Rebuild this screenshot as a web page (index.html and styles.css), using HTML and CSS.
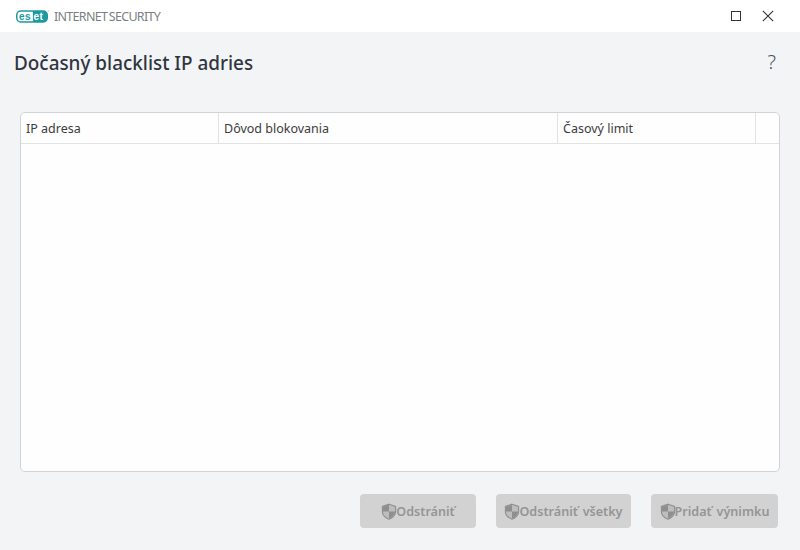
FILE: index.html
```html
<!DOCTYPE html>
<html lang="sk">
<head>
    <meta charset="UTF-8">
    <meta name="viewport" content="width=device-width, initial-scale=1.0">
    <title>Dočasný blacklist IP adries</title>
    <link rel="stylesheet" href="styles.css">
</head>
<body>
    <div class="titlebar">
        <div class="brand">
            <svg class="logo" width="33" height="13" viewBox="0 0 33 13">
                <rect x="0.75" y="1" width="30.5" height="11" rx="4" fill="#fff" stroke="#1b9aa0" stroke-width="1.5"/>
                <path d="M17 1h10.25a4 4 0 0 1 4 4v3a4 4 0 0 1-4 4H17z" fill="#1b9aa0"/>
                <text x="3" y="9.8" class="logo-dark">es</text>
                <text x="17.6" y="9.8" class="logo-light">et</text>
                <circle cx="32.2" cy="0.9" r="0.7" fill="#9cc"/>
            </svg>
            <span class="product">INTERNET SECURITY</span>
        </div>
        <div class="window-buttons">
            <svg width="12" height="12" viewBox="0 0 12 12">
                <rect x="1.5" y="1.5" width="9" height="9" fill="none" stroke="#333" stroke-width="1"/>
            </svg>
            <svg width="12" height="12" viewBox="0 0 12 12">
                <path d="M0.8 0.8L11.2 11.2M11.2 0.8L0.8 11.2" fill="none" stroke="#333" stroke-width="1.1"/>
            </svg>
        </div>
    </div>

    <div class="content">
        <div class="page-head">
            <h1>Dočasný blacklist IP adries</h1>
            <span class="help">?</span>
        </div>

        <div class="table-box">
            <div class="table-head">
                <div class="col col-ip">IP adresa</div>
                <div class="col col-reason">Dôvod blokovania</div>
                <div class="col col-time">Časový limit</div>
                <div class="col col-end"></div>
            </div>
        </div>

        <div class="actions">
            <button class="btn btn-remove" disabled>
                <svg class="shield" width="16" height="17" viewBox="0 0 16 17"><path d="M8 1.2L14.6 3.4V8.5C14.6 12 12 14.6 8 16.2C4 14.6 1.4 12 1.4 8.5V3.4z" fill="#bdbdbd" stroke="#8f8f8f" stroke-width="1.1"/><path d="M8 1.8L2 3.8V8.5H8zM8 8.5V15.6C11.4 14.2 14 11.8 14 8.5z" fill="#8f8f8f"/></svg>Odstrániť
            </button>
            <button class="btn btn-remove-all" disabled>
                <svg class="shield" width="16" height="17" viewBox="0 0 16 17"><path d="M8 1.2L14.6 3.4V8.5C14.6 12 12 14.6 8 16.2C4 14.6 1.4 12 1.4 8.5V3.4z" fill="#bdbdbd" stroke="#8f8f8f" stroke-width="1.1"/><path d="M8 1.8L2 3.8V8.5H8zM8 8.5V15.6C11.4 14.2 14 11.8 14 8.5z" fill="#8f8f8f"/></svg>Odstrániť všetky
            </button>
            <button class="btn btn-add" disabled>
                <svg class="shield" width="16" height="17" viewBox="0 0 16 17"><path d="M8 1.2L14.6 3.4V8.5C14.6 12 12 14.6 8 16.2C4 14.6 1.4 12 1.4 8.5V3.4z" fill="#bdbdbd" stroke="#8f8f8f" stroke-width="1.1"/><path d="M8 1.8L2 3.8V8.5H8zM8 8.5V15.6C11.4 14.2 14 11.8 14 8.5z" fill="#8f8f8f"/></svg>Pridať výnimku
            </button>
        </div>
    </div>
</body>
</html>
```

FILE: styles.css
```css
html, body {
    height: 100%;
}

body {
    margin: 0;
    display: flex;
    flex-direction: column;
    height: 550px;
    overflow: hidden;
    font-family: "Noto Sans", "Open Sans", sans-serif;
    background-color: #f3f4f6;
    color: #333;
}

.titlebar {
    display: flex;
    justify-content: space-between;
    align-items: center;
    height: 32px;
    padding: 0 26px 0 16px;
    background-color: white;
}

.brand {
    display: flex;
    align-items: center;
    gap: 5px;
}

.logo-dark, .logo-light {
    font-family: "Liberation Sans", sans-serif;
    font-size: 10px;
    font-weight: bold;
    letter-spacing: 0.4px;
}

.logo-dark {
    fill: #1b9aa0;
}

.logo-light {
    fill: white;
}

.product {
    font-size: 12.5px;
    letter-spacing: -0.7px;
    word-spacing: -1px;
    color: #7b7f84;
}

.window-buttons {
    display: flex;
    align-items: center;
    gap: 20px;
}

.content {
    flex: 1;
    display: flex;
    flex-direction: column;
    padding: 0 22px 22px 20px;
}

.page-head {
    display: flex;
    justify-content: space-between;
    align-items: center;
    height: 62px;
    margin: 0 0 18px -6px;
}

h1 {
    margin: 0;
    font-size: 18.9px;
    font-weight: 500;
    color: #2f3640;
}

.help {
    margin: 0 2px 3px 0;
    font-size: 20px;
    font-weight: 300;
    color: #4a5560;
}

.table-box {
    flex: 1;
    margin-right: -2px;
    background-color: #fefefe;
    border: 1px solid #d2d3d6;
    border-radius: 5px;
}

.table-head {
    display: flex;
    height: 30px;
    border-bottom: 1px solid #e2e3e5;
}

.col {
    display: flex;
    align-items: center;
    padding-left: 5px;
    font-size: 12.5px;
    color: #3c3c3c;
    border-right: 1px solid #e2e3e5;
}

.col-ip {
    width: 192px;
}

.col-reason {
    width: 333px;
}

.col-time {
    width: 192px;
}

.col-end {
    flex: 1;
    border-right: none;
}

.actions {
    display: flex;
    justify-content: flex-end;
    gap: 20px;
    margin-top: 22px;
}

.btn {
    display: flex;
    align-items: center;
    justify-content: center;
    height: 34px;
    padding: 0;
    border: none;
    border-radius: 4px;
    background-color: #d2d2d2;
    color: #959595;
    font-family: inherit;
    font-size: 12.6px;
    font-weight: 600;
    word-spacing: 1.5px;
}

.btn-remove {
    width: 116px;
}

.btn-remove-all {
    width: 135px;
}

.btn-add {
    width: 127px;
}

.shield {
    margin-right: -1px;
}
```
